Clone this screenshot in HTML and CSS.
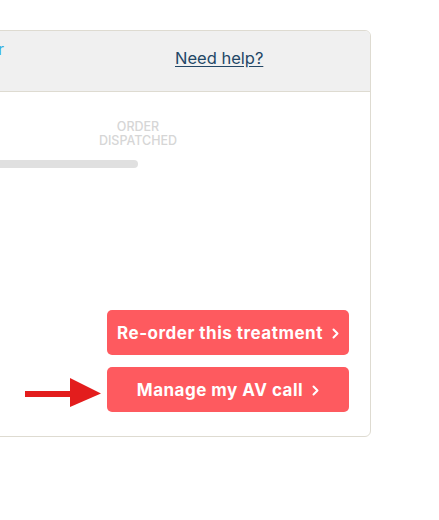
FILE: index.html
```html
<!DOCTYPE html>
<html lang="en">
<head>
    <meta charset="UTF-8">
    <meta name="viewport" content="width=device-width, initial-scale=1.0">
    <title>Order details</title>
    <link rel="stylesheet" href="styles.css">
</head>
<body>

<div class="page">
    <div class="order-card">
        <div class="order-head">
            <a href="#" class="head-link head-link-left">Track order</a>
            <a href="#" class="head-link head-link-help">Need help?</a>
        </div>

        <div class="order-body">
            <div class="timeline">
                <div class="timeline-steps">
                    <span class="timeline-step">Order<br>dispatched</span>
                </div>
                <div class="timeline-bar"></div>
            </div>

            <div class="actions">
                <div class="action-row">
                    <a href="#" class="action-btn">
                        Re-order this treatment
                        <svg class="chevron" width="7" height="11" viewBox="0 0 7 11"><path d="M1.5 1.5 L5.5 5.5 L1.5 9.5" fill="none" stroke="#fff" stroke-width="2" stroke-linecap="round" stroke-linejoin="round"/></svg>
                    </a>
                </div>
                <div class="action-row">
                    <svg class="pointer-arrow" width="78" height="45" viewBox="0 0 78 45">
                        <rect x="1" y="24" width="47" height="6" fill="#e31d1d"/>
                        <polygon points="46,11 77,26.5 46,40" fill="#e31d1d"/>
                    </svg>
                    <a href="#" class="action-btn">
                        Manage my AV call
                        <svg class="chevron" width="7" height="11" viewBox="0 0 7 11"><path d="M1.5 1.5 L5.5 5.5 L1.5 9.5" fill="none" stroke="#fff" stroke-width="2" stroke-linecap="round" stroke-linejoin="round"/></svg>
                    </a>
                </div>
            </div>
        </div>
    </div>
</div>

</body>
</html>
```

FILE: styles.css
```css
body {
    font-family: 'Inter', 'Noto Sans', sans-serif;
    margin: 0;
    padding: 0;
    background: #fff;
    color: #333;
    overflow: hidden;
}

.page {
    padding-top: 30px;
}

/* card runs off the left edge of the window */
.order-card {
    width: 498px;
    margin-left: -129px;
    border: 1px solid #dedbd1;
    border-radius: 6px;
    background: #fff;
    overflow: hidden;
}

.order-head {
    display: flex;
    height: 60px;
    background: #f0f0f0;
    border-bottom: 1px solid #dedbd1;
}

.head-link {
    font-size: 16px;
    line-height: 20px;
    text-decoration: underline;
}

.head-link-left {
    width: 132px;
    text-align: right;
    white-space: nowrap;
    color: #35aee2;
    text-decoration: none;
    padding-top: 8px;
}

.head-link-help {
    margin-left: 171px;
    padding-top: 17px;
    font-size: 16.5px;
    color: #234766;
    text-underline-offset: 2px;
}

.order-body {
    padding: 0 21px 24px 0;
}

.timeline {
    width: 270px;
    padding-top: 28px;
}

.timeline-steps {
    display: flex;
    justify-content: flex-end;
}

.timeline-step {
    width: 130px;
    margin-right: -61px;
    text-align: center;
    font-size: 12.5px;
    line-height: 14px;
    font-weight: 500;
    text-transform: uppercase;
    color: #d6d6d6;
}

.timeline-bar {
    margin-top: 12px;
    width: 266px;
    height: 8px;
    border-radius: 4px;
    background: #e0e0e0;
}

.actions {
    display: flex;
    flex-direction: column;
    align-items: flex-end;
    gap: 12px;
    margin-top: 142px;
}

.action-row {
    display: flex;
    align-items: flex-start;
    gap: 5px;
}

.pointer-arrow {
    display: block;
}

.action-btn {
    display: flex;
    justify-content: center;
    align-items: center;
    gap: 9px;
    width: 242px;
    height: 45px;
    box-sizing: border-box;
    border-radius: 5px;
    background: #fe5a5f;
    color: #fff;
    font-size: 17px;
    font-weight: 700;
    letter-spacing: 0.5px;
    text-decoration: none;
}

.chevron {
    display: block;
    margin-top: 1px;
}
```
